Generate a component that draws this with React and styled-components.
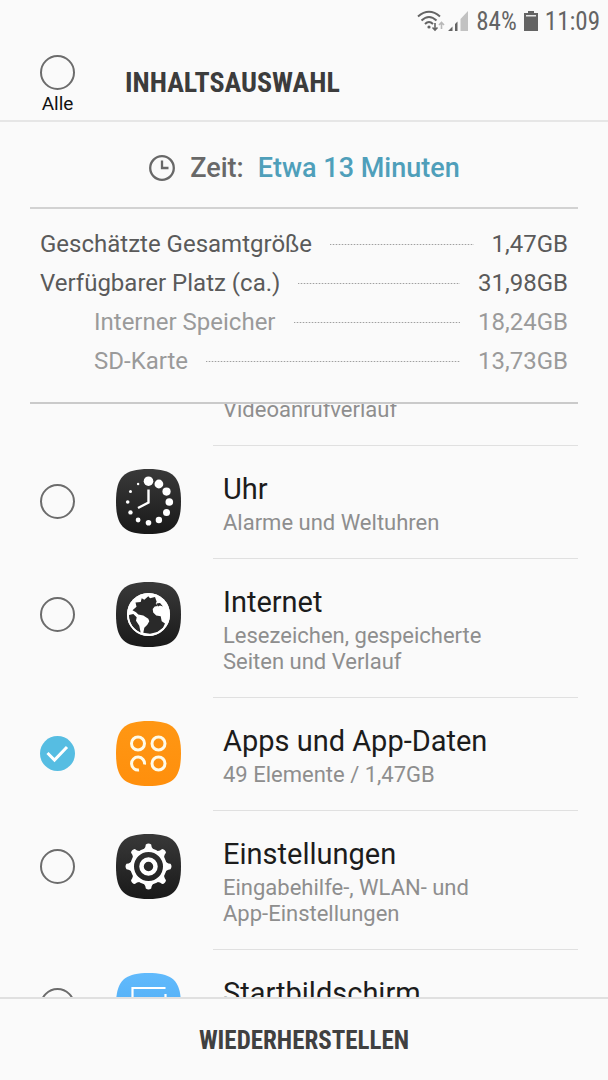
import { useLayoutEffect, useRef, useState } from 'react';
import styled, { createGlobalStyle } from 'styled-components';

const GlobalStyle = createGlobalStyle`
  * { box-sizing: border-box; }
  body {
    margin: 0;
    background: #fafafa;
    font-family: Roboto, "Noto Sans", sans-serif;
  }
`;

const condensed = '"Roboto Condensed", "Liberation Sans Narrow", Roboto, sans-serif';

const Screen = styled.div`
  display: flex;
  flex-direction: column;
  height: 100vh;
  color: #1c1c1c;
`;

const StatusBar = styled.div`
  display: flex;
  flex-shrink: 0;
  justify-content: flex-end;
  align-items: center;
  gap: 7px;
  height: 42px;
  padding-right: 8px;
  color: #646464;
  font-family: ${condensed};
  font-size: 25px;
`;

const Reception = styled.span`
  display: flex;
  gap: 3px;
`;

const Header = styled.header`
  display: flex;
  flex-shrink: 0;
  align-items: flex-start;
  gap: 50px;
  height: 80px;
  padding: 13px 40px 0;
  border-bottom: 2px solid #e6e6e6;
`;

const SelectAll = styled.label`
  display: flex;
  flex-direction: column;
  align-items: center;
  gap: 3px;
  width: 35px;
  color: #111;
  font-size: 19px;
  line-height: 22px;
`;

const Check = styled.input`
  appearance: none;
  flex-shrink: 0;
  width: 35px;
  height: 35px;
  margin: 0;
  border: 2px solid #6c6c6c;
  border-radius: 50%;

  &:checked {
    border: 0;
    background: #56bde2 url("data:image/svg+xml,%3Csvg xmlns='http://www.w3.org/2000/svg' viewBox='0 0 35 35'%3E%3Cpath d='M7.500 17l7 7L27 11' fill='none' stroke='%23fff' stroke-width='3'/%3E%3C/svg%3E");
  }
`;

const Title = styled.h1`
  margin: 0;
  color: #3c3c3c;
  font-family: ${condensed};
  font-size: 28px;
  font-weight: 700;
  line-height: 56px;
`;

const Summary = styled.section`
  flex-shrink: 0;
  margin: 0 30px;
`;

const Duration = styled.div`
  display: flex;
  justify-content: center;
  align-items: center;
  gap: 14px;
  height: 87px;
  padding-top: 7px;
  border-bottom: 2px solid #d2d2d2;
  color: #686868;
  font-size: 27px;
  font-weight: 500;

  strong {
    color: #4f9fba;
    font-weight: 500;
  }
`;

const Sizes = styled.dl`
  margin: 0;
  padding: 16px 10px 21px;
  border-bottom: 2px solid #cacaca;
`;

const SizeRow = styled.div`
  display: flex;
  align-items: center;
  gap: 18px;
  padding-left: ${({ $sub }) => ($sub ? '54px' : '0')};
  color: ${({ $sub }) => ($sub ? '#9a9a9a' : '#5a5a5a')};
  font-size: 24px;
  line-height: 39px;

  dd { margin: 0; }
`;

const Leader = styled.span`
  flex: 1;
  height: 1px;
  background: repeating-linear-gradient(90deg, #a0a0a0 0 1px, #e0e0e0 1px 3px);
`;

const List = styled.ul`
  flex: 1;
  min-height: 0;
  margin: 0;
  padding: 0 30px 0 40px;
  overflow-y: auto;
  scrollbar-width: none;
  list-style: none;
`;

const Item = styled.li`
  display: flex;
`;

const CheckSlot = styled.div`
  display: flex;
  align-items: center;
  width: 76px;
  height: 65px;
  margin-top: 23px;
`;

const IconSlot = styled.div`
  width: 97px;
  margin-top: 23px;

  svg { display: block; }
`;

const ItemText = styled.div`
  flex: 1;
  padding: 25px 80px 22px 10px;
  border-bottom: 1px solid #e0e0e0;
`;

const TailText = styled(ItemText)`
  margin-left: 173px;
  padding-top: 0;
`;

const ItemTitle = styled.label`
  display: block;
  margin-bottom: 3px;
  font-size: 29px;
  line-height: 36px;
`;

const ItemInfo = styled.p`
  margin: 0;
  color: #8e8e8e;
  font-size: 22px;
  line-height: 26px;
`;

const Footer = styled.footer`
  flex-shrink: 0;
  border-top: 2px solid #e0e0e0;
`;

const RestoreButton = styled.button`
  width: 100%;
  height: 81px;
  padding: 2px 0 0;
  border: 0;
  background: none;
  color: #404040;
  font-family: ${condensed};
  font-size: 25px;
  font-weight: 700;
`;

function WifiIcon() {
  return (
    <svg width="28" height="22" viewBox="0 0 28 22" fill="none" stroke="#646464" strokeWidth="2">
      <path d="M1 6.500Q12 -3 23 6.500M4.500 10.500Q12 3.500 19.500 10.500M8 14Q12 10 16 14" />
      <circle cx="12" cy="17" r="1.600" fill="#646464" stroke="none" />
      <path d="M18 13v7M15.500 17.500l2.500 2.500 2.500-2.500" strokeWidth="1.600" />
      <path d="M24.500 19v-6M22 15l2.500-2.500L27 15" stroke="#b8b8b8" strokeWidth="1.600" />
    </svg>
  );
}

function SignalIcon() {
  return (
    <svg width="21" height="22" viewBox="0 0 21 22" fill="#646464">
      <path d="M0 21h4.500v-4.500zM7 21h2.500v-9.500L7 14z" />
      <path d="M12.500 21H20V1l-7.500 8z" fill="#c2c2c2" />
    </svg>
  );
}

function BatteryIcon() {
  return (
    <svg width="14" height="22" viewBox="0 0 14 22">
      <path d="M4 1h6v2h4v18H0V3h4z" fill="#646464" />
      <path d="M2 5h10v1.500H2z" fill="#e8e8e8" />
    </svg>
  );
}

function TimeIcon() {
  return (
    <svg width="28" height="28" viewBox="0 0 28 28" fill="none" stroke="#686868" strokeWidth="2.300">
      <circle cx="14" cy="14" r="11.800" />
      <path d="M14 6.500V14h6.500" />
    </svg>
  );
}

function Tile({ id, from, to, children }) {
  return (
    <svg width="65" height="65" viewBox="0 0 65 65" aria-hidden="true">
      <defs>
        <linearGradient id={id} x1="0" y1="0" x2="0" y2="1">
          <stop offset="0" stopColor={from} />
          <stop offset="1" stopColor={to} />
        </linearGradient>
      </defs>
      <path
        d="M32.500 0C57 0 65 8 65 32.500S57 65 32.500 65 0 57 0 32.500 8 0 32.500 0z"
        fill={`url(#${id})`}
      />
      {children}
    </svg>
  );
}

// hour dots shrink clockwise, starting at twelve
const hourDots = [4.8, 4.4, 4.1, 3.8, 3.5, 3.2, 2.8, 2.4, 2.2, 1.8, 1.5, 1.2];

function ClockTile() {
  return (
    <Tile id="tile-clock" from="#393939" to="#191919">
      {hourDots.map((r, i) => {
        const a = (i * Math.PI) / 6;
        return (
          <circle key={r} cx={32.5 + 20.8 * Math.sin(a)} cy={33 - 20.8 * Math.cos(a)} r={r} fill="#fff" />
        );
      })}
      <path d="M32.500 20.500v13L22 39" fill="none" stroke="#fff" strokeWidth="2.400" />
    </Tile>
  );
}

function GlobeTile() {
  return (
    <Tile id="tile-globe" from="#3a3a3a" to="#191919">
      <circle cx="32.500" cy="32.500" r="21.500" fill="#fff" />
      <g fill="#292929">
        <path d="M19.500 20.500l5.200-.5 1-3.700 2.600 1.500 4-3.500 1.700 2 5-1.200 1.700 4.600-1 1.500 2 2.800-3 .5-2 2.500.5 3.500 3 3 4.500.7 1 5 3.300 2.300-2 4.300-5.700 4.200-7.300 1.800-6.700-1 1-5 3-3 2-3.600-1-2.400-5-3.300-5-1-2.300-2.300-3.500-2 4-3.400z" />
        <path d="M13 33l4.300-1 3.400 3.300-.7 3.400 3.300 5 1.400 7C17.500 47.500 13 41 13 33z" />
        <path d="M40.500 21.500l3.500-.5 3 3.500-3-1-2 1z" />
      </g>
      <circle cx="32.500" cy="32.500" r="20.700" fill="none" stroke="#fff" strokeWidth="1.600" />
    </Tile>
  );
}

function AppsTile() {
  return (
    <Tile id="tile-apps" from="#ff9714" to="#ff8f0c">
      <g fill="none" stroke="#fffbe8" strokeWidth="3">
        <circle cx="22" cy="22.500" r="6.500" />
        <circle cx="42.500" cy="22.500" r="6.500" />
        <circle cx="42.500" cy="42.500" r="6.500" />
        <path d="M23 49A6.500 6.500 0 1 1 28.500 43.500" />
      </g>
    </Tile>
  );
}

function GearTile() {
  return (
    <Tile id="tile-gear" from="#393939" to="#191919">
      {[0, 45, 90, 135, 180, 225, 270, 315].map((deg) => (
        <path
          key={deg}
          d="M25.500 16.500Q29.500 15 29.800 10.500Q32.500 8.500 35.200 10.500Q35.500 15 39.500 16.500z"
          fill="#fff"
          transform={`rotate(${deg} 32.500 32.500)`}
        />
      ))}
      <circle cx="32.500" cy="32.500" r="16.300" fill="none" stroke="#fff" strokeWidth="3.600" />
      <circle cx="32.500" cy="32.500" r="7" fill="none" stroke="#fff" strokeWidth="4.500" />
    </Tile>
  );
}

function HomeTile() {
  return (
    <Tile id="tile-home" from="#61bafc" to="#4aa9f2">
      <path d="M16.500 46V15h33M49.500 21v25M16.500 46h33" fill="none" stroke="#fff" strokeWidth="2.200" />
    </Tile>
  );
}

const sizes = [
  { label: 'Geschätzte Gesamtgröße', value: '1,47GB' },
  { label: 'Verfügbarer Platz (ca.)', value: '31,98GB' },
  { label: 'Interner Speicher', value: '18,24GB', sub: true },
  { label: 'SD-Karte', value: '13,73GB', sub: true },
];

const items = [
  { id: 'clock', title: 'Uhr', info: 'Alarme und Weltuhren', Icon: ClockTile },
  { id: 'internet', title: 'Internet', info: 'Lesezeichen, gespeicherte Seiten und Verlauf', Icon: GlobeTile },
  { id: 'apps', title: 'Apps und App-Daten', info: '49 Elemente / 1,47GB', Icon: AppsTile },
  { id: 'settings', title: 'Einstellungen', info: 'Eingabehilfe-, WLAN- und App-Einstellungen', Icon: GearTile },
  { id: 'home', title: 'Startbildschirm', Icon: HomeTile },
];

function App() {
  const [selected, setSelected] = useState(['apps']);
  const listRef = useRef(null);

  useLayoutEffect(() => {
    listRef.current.scrollTop = 7;
  }, []);

  const toggle = (id) =>
    setSelected((prev) => (prev.includes(id) ? prev.filter((x) => x !== id) : [...prev, id]));

  const toggleAll = (e) => setSelected(e.target.checked ? items.map((item) => item.id) : []);

  return (
    <Screen>
      <GlobalStyle />
      <StatusBar>
        <Reception>
          <WifiIcon />
          <SignalIcon />
        </Reception>
        <span>84%</span>
        <BatteryIcon />
        <span>11:09</span>
      </StatusBar>
      <Header>
        <SelectAll>
          <Check type="checkbox" checked={selected.length === items.length} onChange={toggleAll} />
          Alle
        </SelectAll>
        <Title>INHALTSAUSWAHL</Title>
      </Header>
      <Summary>
        <Duration>
          <TimeIcon />
          <span>Zeit:</span>
          <strong>Etwa 13 Minuten</strong>
        </Duration>
        <Sizes>
          {sizes.map(({ label, value, sub }) => (
            <SizeRow key={label} $sub={sub}>
              <dt>{label}</dt>
              <Leader />
              <dd>{value}</dd>
            </SizeRow>
          ))}
        </Sizes>
      </Summary>
      <List ref={listRef}>
        <Item>
          <TailText>
            <ItemInfo>Videoanrufverlauf</ItemInfo>
          </TailText>
        </Item>
        {items.map(({ id, title, info, Icon }) => (
          <Item key={id}>
            <CheckSlot>
              <Check
                type="checkbox"
                id={id}
                checked={selected.includes(id)}
                onChange={() => toggle(id)}
              />
            </CheckSlot>
            <IconSlot>
              <Icon />
            </IconSlot>
            <ItemText>
              <ItemTitle htmlFor={id}>{title}</ItemTitle>
              {info && <ItemInfo>{info}</ItemInfo>}
            </ItemText>
          </Item>
        ))}
      </List>
      <Footer>
        <RestoreButton type="button">WIEDERHERSTELLEN</RestoreButton>
      </Footer>
    </Screen>
  );
}

export default App;
